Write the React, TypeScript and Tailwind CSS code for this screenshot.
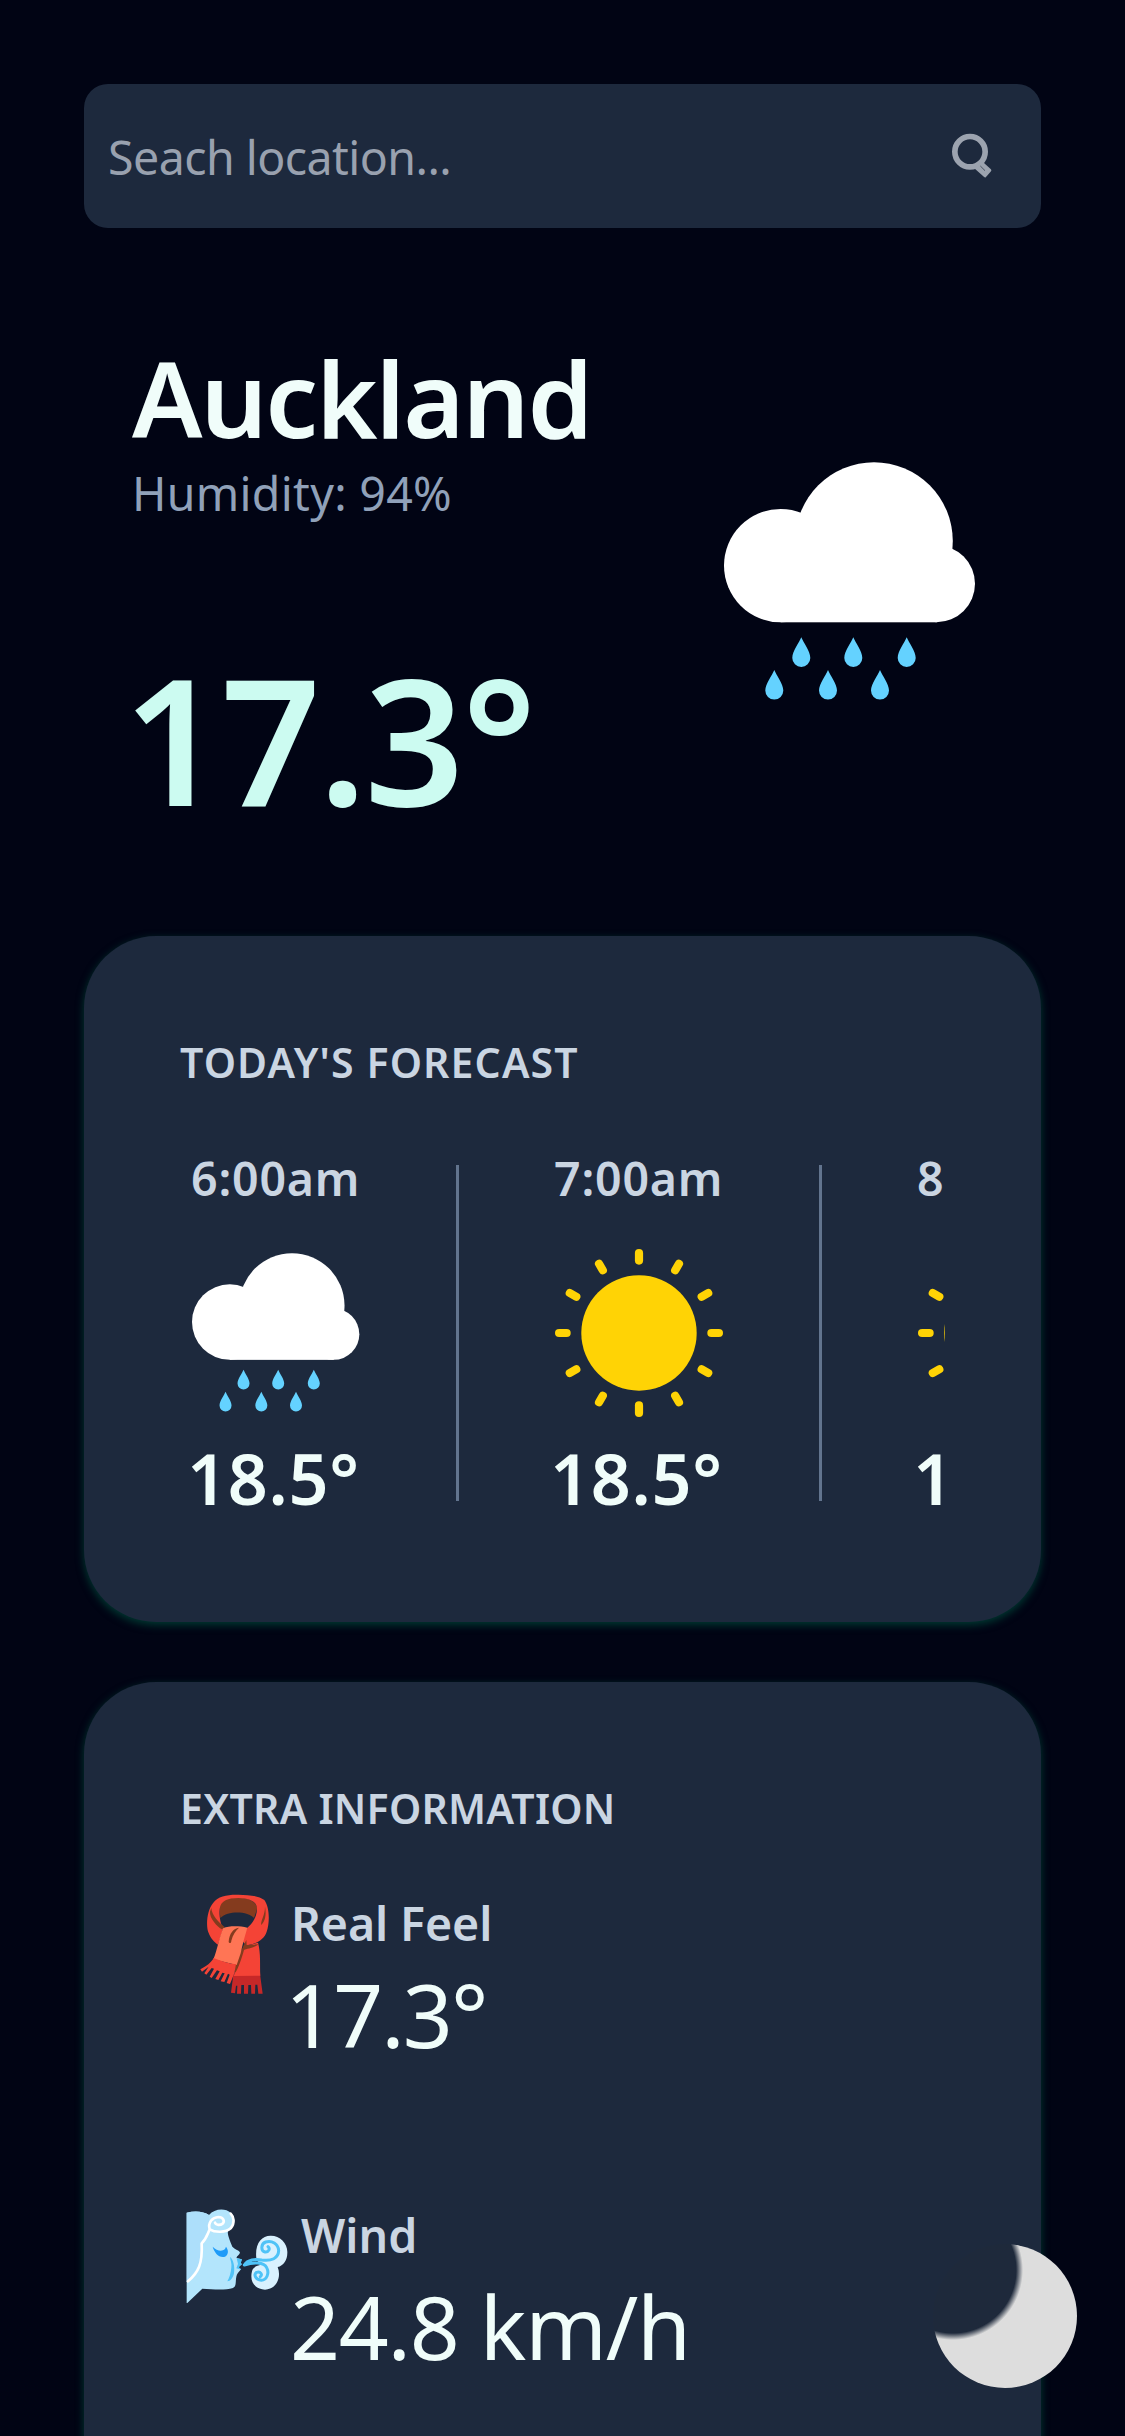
const RAYS = [0, 30, 60, 90, 120, 150, 180, 210, 240, 270, 300, 330];

const DROPS: [number, number][] = [
  [77.3, 181.3],
  [129.3, 181.3],
  [182.7, 181.3],
  [50.3, 214],
  [104, 214],
  [156, 214],
];

function RainIcon({ className }: { className: string }) {
  return (
    <svg viewBox="0 0 252 252" className={className}>
      <g fill="#ffffff">
        <circle cx="150" cy="85" r="78.8" />
        <circle cx="56.7" cy="109.6" r="56.7" />
        <circle cx="212.5" cy="127.8" r="38.5" />
        <rect x="56.7" y="109" width="156" height="57.3" />
      </g>
      {DROPS.map(([x, y]) => (
        <path
          key={`${x}-${y}`}
          transform={`translate(${x} ${y})`}
          d="M0 0C-2 5-9 14-9 20.6a9 9 0 0 0 18 0C9 14 2 5 0 0Z"
          fill="#64d2ff"
        />
      ))}
    </svg>
  );
}

function SunIcon({ className }: { className: string }) {
  return (
    <svg viewBox="0 0 168 168" className={className}>
      <circle cx="84" cy="84" r="57.7" fill="#ffd305" />
      {RAYS.map((angle) => (
        <path
          key={angle}
          transform={`rotate(${angle} 84 84)`}
          d="M84 4.1V11.6"
          stroke="#ffd305"
          strokeWidth="8.2"
          strokeLinecap="round"
        />
      ))}
    </svg>
  );
}

function SearchIcon() {
  return (
    <svg viewBox="150 210 132 150" className="h-[50px] w-[44px]">
      <circle cx="210" cy="272" r="45.5" fill="none" stroke="#9ca3af" strokeWidth="17" />
      <path
        d="M246 306L270 328L255 345L228 321Z"
        fill="#9ca3af"
        stroke="#9ca3af"
        strokeWidth="8"
        strokeLinejoin="round"
      />
      <path d="M241 315L255 329" stroke="#1e293b" strokeWidth="2" />
    </svg>
  );
}

function ScarfIcon() {
  return (
    <svg viewBox="30 390 324 324" className="size-[108px]">
      <path d="M190 644L270 642L278 701L265 701L262 674L256 674L255 701L244 701L243 675L235 675L234 701L222 701L222 675L214 675L213 701L201 701L202 677L198 677L195 700L183 698Z" fill="#c62828" />
      <path d="M264 548C273 580 269 615 271 647L192 648L200 600L222 560Z" fill="#f44336" />
      <path d="M148 440C150 420 175 412 205 413C237 413 258 425 262 445L252 474C235 454 175 450 151 474Z" fill="#843b1e" />
      <path
        fillRule="evenodd"
        d="M205 404C175 403 143 408 130 428C110 450 107 500 116 519C121 534 133 547 144 554L160 505C150 492 147 460 149 446C152 422 175 414 205 414C240 415 263 425 261 450C258 480 240 498 230 505L215 540L228 556C250 556 283 540 290 515C299 490 300 444 283 420C265 406 235 405 205 404Z"
        fill="#f44336"
      />
      <path d="M124 444C126 468 145 485 164 501L156 508C142 500 118 475 120 455Z" fill="#843b1e" />
      <path d="M285 440C290 465 285 485 273 495C273 478 285 465 285 440Z" fill="#843b1e" />
      <path d="M229 540L230 555L266 553C250 566 230 566 222 570C215 595 205 625 196 638L190 620Z" fill="#843b1e" />
      <path d="M160 504C178 497 210 498 232 503C224 530 217 555 212 580L200 615L130 598C142 570 148 530 160 504Z" fill="#ff7555" />
      <path d="M207 503C190 505 178 520 176 545C178 552 184 550 184 542C188 525 197 512 207 503Z" fill="#843b1e" />
      <path d="M131 594C155 604 175 610 198 613L193 640L180 672L170 669L179 644L174 641L163 666L152 664L164 640L157 638L145 660L136 657L149 634L141 631L125 654L119 650L132 626L125 624L109 644L103 640L116 620L96 635L91 628C110 617 123 609 131 594Z" fill="#f44336" />
    </svg>
  );
}

function WindFaceIcon() {
  return (
    <svg viewBox="60 66 324 324" className="size-[108px]">
      <path d="M80 98C105 91 132 94 147 105C163 86 195 83 213 99C227 112 224 140 205 152C200 158 208 178 217 200C223 207 240 212 240 218C238 225 228 229 230 234L245 238L242 250L246 252L236 262L243 268C236 276 230 282 229 290C226 305 230 318 219 324C195 331 160 328 127 326L82 369L80 369Z" fill="#b3e5fc" />
      <path d="M80 98C105 91 132 94 147 105L148 145L124 190L128 240L82 305L80 305Z" fill="#addffb" />
      <path d="M84 304C115 278 128 252 125 190C140 175 143 160 149 148M149 148C143 128 157 112 175 111C190 111 195 124 188 131C180 137 168 136 165 128M149 148C165 158 198 158 212 145C226 129 221 110 212 101" fill="none" stroke="#ffffff" strokeWidth="8" strokeLinecap="round" strokeLinejoin="round" />
      <path d="M158 200C170 211 184 217 195 207L198 200C207 211 205 225 195 230C177 235 163 218 158 200Z" fill="#1e9bf8" />
      <path d="M210 231C220 237 225 260 222 280C219 294 211 304 202 304C207 295 213 280 214 262C216 250 211 242 210 231Z" fill="#4fc3f7" />
      <path d="M230 235L246 238L242 250L246 252L236 261L244 269L229 265L234 252Z" fill="#4fc3f7" />
      <path d="M289 235C284 190 305 166 333 167C360 167 383 190 382 218C382 240 370 257 353 261C365 290 350 328 315 329C285 328 268 305 276 274C278 263 288 258 300 255Z" fill="#d9f1fe" />
      <path d="M253 255C263 239 286 236 305 240C335 244 355 235 356 212C355 190 335 181 317 186C302 192 302 213 315 216C327 217 331 206 324 200M253 255C280 246 312 246 320 263C329 280 320 300 304 301C286 300 280 283 290 277C302 273 308 284 301 290" fill="none" stroke="#4fc3f7" strokeWidth="9" strokeLinecap="round" strokeLinejoin="round" />
    </svg>
  );
}

const HOURS = [
  { time: "6:00am", temp: "18.5°", Icon: RainIcon },
  { time: "7:00am", temp: "18.5°", Icon: SunIcon },
  { time: "8:00am", temp: "18.5°", Icon: SunIcon },
];

const CARD =
  "rounded-[72px] bg-slate-800 px-24 pt-24 shadow-[0_3px_9px_rgba(0,95,72,0.6)]";
const CARD_TITLE =
  "text-[41px] leading-[60px] font-semibold whitespace-nowrap text-slate-300 uppercase";

export default function App() {
  return (
    <main className="relative h-[2436px] w-[1125px] overflow-hidden bg-[#010414] px-[84px] pt-[84px] font-['Noto_Sans','Open_Sans',sans-serif]">
      <div className="flex h-36 items-center justify-between rounded-3xl bg-slate-800 pr-[47px] pl-6">
        <span className="pt-[2px] text-[46.5px] leading-[72px] tracking-[-0.55px] whitespace-nowrap text-gray-400">
          Seach location...
        </span>
        <SearchIcon />
      </div>

      <section className="mt-[110px] flex justify-between pr-[65px] pl-12">
        <div className="flex flex-col whitespace-nowrap">
          <h1 className="text-[105px] leading-[119px] font-semibold tracking-[-2.1px] text-[#f0fdfa]">
            Auckland
          </h1>
          <p className="text-[46.5px] leading-[72px] tracking-[0.3px] text-slate-400">
            Humidity: 94%
          </p>
          <p className="-ml-[9px] mt-[119px] text-[175px] leading-[180px] font-semibold tracking-[-2.4px] text-[#ccfbf1]">
            17.3°
          </p>
        </div>
        <RainIcon className="mt-[118px] size-[252px]" />
      </section>

      <section className={`${CARD} mt-[108px] h-[686px]`}>
        <h2 className={`${CARD_TITLE} tracking-[1.15px]`}>Today's Forecast</h2>
        <div className="mt-[50px] flex overflow-hidden pb-4 pl-3">
          {HOURS.map(({ time, temp, Icon }, i) => (
            <div key={time} className="flex shrink-0">
              {i > 0 && <div className="mx-24 mt-[23px] h-[336px] w-[3px] bg-slate-500" />}
              <div className="flex w-[168px] flex-col whitespace-nowrap">
                <span className="-ml-px text-[46.5px] leading-[72px] font-semibold tracking-[0.8px] text-slate-300">
                  {time}
                </span>
                <Icon className="mt-[35px] size-[168px]" />
                <span className="-ml-[5px] mt-[19px] text-[70px] leading-[84px] font-semibold tracking-[0.7px] text-[#f0fdfa]">
                  {temp}
                </span>
              </div>
            </div>
          ))}
        </div>
      </section>

      <section className={`${CARD} mt-[60px] h-[900px]`}>
        <h2 className={`${CARD_TITLE} tracking-[0.25px]`}>Extra Information</h2>
        <div className="mt-[49px] flex h-[312px] whitespace-nowrap">
          <div className="mt-[3px]">
            <ScarfIcon />
          </div>
          <div className="flex flex-col">
            <span className="pl-[3px] text-[46.5px] leading-[72px] font-semibold tracking-[-0.1px] text-slate-300">
              Real Feel
            </span>
            <span className="-ml-[3px] text-[87.5px] leading-[110px] tracking-[-1.9px] text-[#f0fdfa]">
              17.3°
            </span>
          </div>
        </div>
        <div className="flex h-[312px] whitespace-nowrap">
          <div className="mt-[3px]">
            <WindFaceIcon />
          </div>
          <div className="flex flex-col">
            <span className="pl-[13px] text-[46.5px] leading-[72px] font-semibold text-slate-300">
              Wind
            </span>
            <span className="pl-[2px] text-[87.5px] leading-[110px] tracking-[-1.3px] text-[#f0fdfa]">
              24.8 km/h
            </span>
          </div>
        </div>
      </section>

      <button
        aria-label="Toggle dark mode"
        className="absolute right-12 bottom-12 size-36 rounded-full bg-[radial-gradient(circle_at_20px_26px,#1e293b_63px,#dddddd_70px)]"
      />
    </main>
  );
}
